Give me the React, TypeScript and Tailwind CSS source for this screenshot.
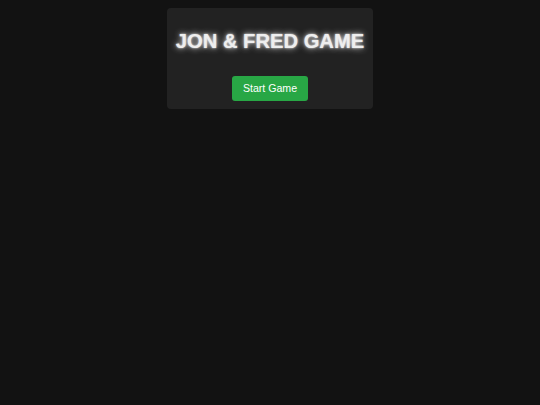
import React from "react";

export default function App() {
  return (
    <div
      className="min-h-screen w-full bg-[#121212] flex flex-col items-center pt-2"
      style={{ fontFamily: '"Liberation Sans", Arial, sans-serif' }}
    >
      <div className="bg-[#222222] rounded-[4px] px-[9px] pt-[22px] pb-[8px] flex flex-col items-center">
        <h1 className="text-[20.2px] leading-[23px] font-bold text-[#eeeeee] [text-shadow:0_0_6px_rgba(255,255,255,0.9),0_0_2px_rgba(255,255,255,0.8)]">
          JON &amp; FRED GAME
        </h1>
        <button className="mt-[23px] w-[76px] h-[25px] rounded-[3px] bg-[#28a745] text-white text-[10.6px] leading-none">
          Start Game
        </button>
      </div>
    </div>
  );
}
